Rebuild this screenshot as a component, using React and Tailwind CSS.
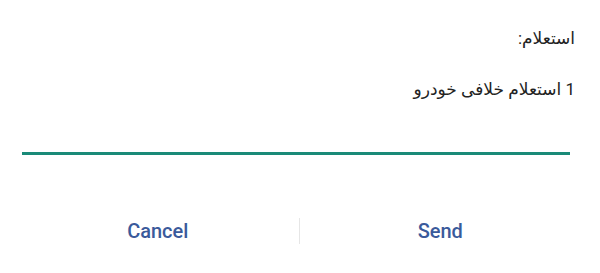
export default function App() {
  return (
    <div className="w-[600px] h-[273px] bg-white flex flex-col" style={{ fontFamily: "Roboto, 'DejaVu Sans', sans-serif" }}>
      <div dir="rtl" className="px-[25px] pt-[26px] text-[17px] text-[#222]">
        <p className="leading-6">استعلام:</p>
        <p className="leading-6 mt-[27px]">1 استعلام خلافی خودرو</p>
      </div>
      <div className="ml-[22px] mr-[30px] mt-[51px] h-[3px] bg-[#1a8a78]" />
      <div className="flex items-center mt-[61px] h-[30px] ml-[17px] mr-[19px]">
        <button className="flex-1 text-center text-[20px] font-medium text-[#3a5a9b]">Cancel</button>
        <div className="w-px h-[26px] bg-[#e6e6e6]" />
        <button className="flex-1 text-center text-[20px] font-medium text-[#3a5a9b]">Send</button>
      </div>
    </div>
  );
}
